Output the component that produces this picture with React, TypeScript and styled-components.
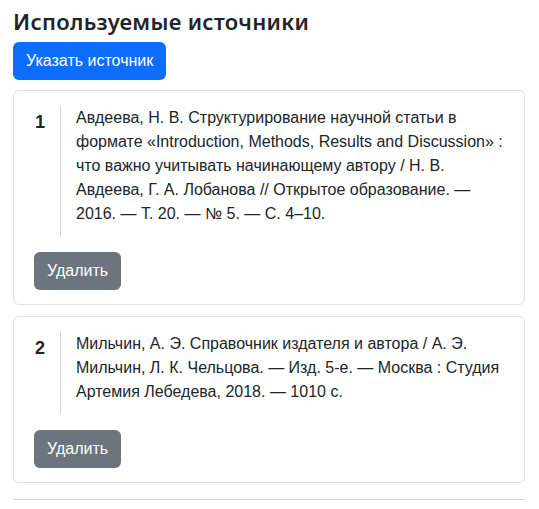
import styled, { createGlobalStyle } from "styled-components";

const GlobalStyle = createGlobalStyle`
    * { box-sizing: border-box; }
    body {
        margin: 0;
        background: #fff;
        color: #212529;
        font-family: "Liberation Sans", Arial, sans-serif;
        font-size: 16px;
        line-height: 1.5;
    }
`;

const Page = styled.div`
    padding: 8px 14px 0 13px;
`;

const Title = styled.h4`
    margin: 0 0 8px;
    font-family: "Noto Sans", sans-serif;
    font-size: 22px;
    font-weight: 600;
    line-height: 1.2;
    letter-spacing: 0.3px;
`;

const Button = styled.button<{ $variant?: "primary" | "secondary" }>`
    display: inline-block;
    padding: 6px 12px;
    border: 1px solid transparent;
    border-radius: 6px;
    font-family: inherit;
    font-size: 16px;
    line-height: 1.5;
    color: #fff;
    background-color: ${(p) => (p.$variant === "secondary" ? "#6c757d" : "#0d6efd")};
    cursor: pointer;
`;

const List = styled.div`
    display: flex;
    flex-direction: column;
    gap: 11px;
    margin-top: 10px;
`;

const Card = styled.div`
    border: 1px solid #dee2e6;
    border-radius: 6px;
    padding: 15px 20px 14px 20px;
    display: flex;
    flex-direction: column;
    align-items: flex-start;
    gap: 16px;
`;

const Entry = styled.div`
    display: flex;
    align-items: stretch;
    width: 100%;
`;

const Num = styled.div`
    width: 27px;
    padding: 4px 0 0 1px;
    font-size: 18px;
    font-weight: 700;
    line-height: 24px;
    border-right: 1px solid #ced4da;
`;

const Text = styled.div`
    flex: 1;
    padding: 0 0 10px 15px;
`;

const Divider = styled.hr`
    margin: 16px 0 0;
    border: 0;
    border-top: 1px solid #d3d3d3;
`;

const sources = [
    "Авдеева, Н. В. Структурирование научной статьи в формате «Introduction, Methods, Results and Discussion» : что важно учитывать начинающему автору / Н. В. Авдеева, Г. А. Лобанова // Открытое образование. — 2016. — Т. 20. — № 5. — С. 4–10.",
    "Мильчин, А. Э. Справочник издателя и автора / А. Э. Мильчин, Л. К. Чельцова. — Изд. 5-е. — Москва : Студия Артемия Лебедева, 2018. — 1010 с.",
];

const App = () => {
    return (
        <Page>
            <GlobalStyle />
            <Title>Используемые источники</Title>
            <Button>Указать источник</Button>
            <List>
                {sources.map((s, i) => (
                    <Card key={i}>
                        <Entry>
                            <Num>{i + 1}</Num>
                            <Text>{s}</Text>
                        </Entry>
                        <Button $variant="secondary">Удалить</Button>
                    </Card>
                ))}
            </List>
            <Divider />
        </Page>
    );
};

export default App;
